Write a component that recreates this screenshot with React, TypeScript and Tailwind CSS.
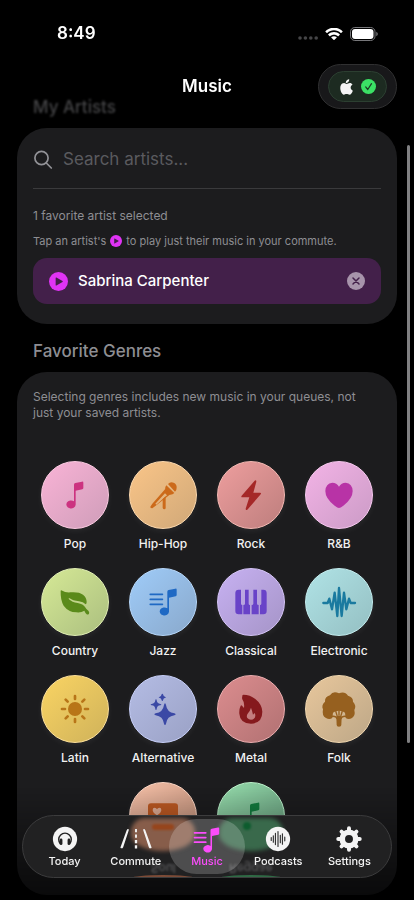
import { useState, type ReactNode } from 'react'
import clsx from 'clsx'

interface Genre {
  name: string
  circle: string
  icon: ReactNode
  underTabBar?: boolean
}

interface Tab {
  name: string
  icon: ReactNode
}

const NotePath = () => (
  <path d="M57 29q0-4 4-5l20-4q4-1 4 3v16q0 3-3 4l-20 4v42a14 12 0 1 1-5-10z" />
)

const PlaylistPath = () => (
  <>
    <path d="M73 29q0-4 4-5l20-4q4-1 4 3v16q0 3-3 4l-20 4v42a14 12 0 1 1-5-10z" />
    <path d="M22 37h36M22 52h36M22 67h36" fill="none" stroke="currentColor" strokeWidth="5.5" strokeLinecap="round" />
  </>
)

const GlyphIcon = ({ children, className = 'w-10 h-10' }: { children: ReactNode; className?: string }) => (
  <svg viewBox="0 0 120 120" className={className} fill="currentColor" aria-hidden="true">
    {children}
  </svg>
)

const genres: Genre[] = [
  {
    name: 'Pop',
    circle: 'from-[#f9b3d6] to-[#cf9db9] border-[#fccbe2] text-[#cc3380]',
    icon: <NotePath />,
  },
  {
    name: 'Hip-Hop',
    circle: 'from-[#fac588] to-[#d0a878] border-[#fdd9ae] text-[#cc6a1a]',
    icon: (
      <>
        <path d="M75 27a15 15 0 0 1 26 11q0 8-5 12z" />
        <path d="M70 31l24 23q-6 6-14 5L66 45q-1-8 4-14z" />
        <path d="M66 43l16 15-45 35-9 7-5-1-1-4 6-9zM66 55L37 86l3 3 32-28z" fillRule="evenodd" />
        <path d="M59 72l9-8v34q0 5-4 5t-5-5z" />
      </>
    ),
  },
  {
    name: 'Rock',
    circle: 'from-[#ee9e9e] to-[#bd7e7d] border-[#f4b9b3] text-[#a52828]',
    icon: <path d="M71 17L32 62q-3 5 2 5h21L44 101q0 6 5 3L89 58q3-5-2-5H67l9-33q0-6-5-3z" />,
  },
  {
    name: 'R&B',
    circle: 'from-[#f3b3e6] to-[#cb9bc6] border-[#f8c9f0] text-[#b833a6]',
    icon: <path d="M60 99Q56 99 47 92 19 71 19 48 20 25 40 23q13 0 20 12 7-12 20-12 20 2 21 25 0 23-28 44-9 7-13 7z" />,
  },
  {
    name: 'Country',
    circle: 'from-[#d6e996] to-[#abbf7f] border-[#e1efb4] text-[#5a8a1a]',
    icon: (
      <path d="M17 27q0-4 5-1 8 6 24 5 26-2 38 7 11 8 11 22 0 6-3 7-7-7-20-9-19-2-28-9-5-2-2 3 9 9 26 11 17 3 22 12 4 7 10 11 4 5 2 9-3 4-7 2-3-2-7-11-10 7-24 5-24-1-38-20Q16 54 17 27z" />
    ),
  },
  {
    name: 'Jazz',
    circle: 'from-[#9fccf9] to-[#89a8cb] border-[#b7d8fb] text-[#1f69c4]',
    icon: <PlaylistPath />,
  },
  {
    name: 'Classical',
    circle: 'from-[#c7b1f2] to-[#a594c7] border-[#d6c5f8] text-[#6943c8]',
    icon: (
      <path d="M23 23h7v42q0 4 4 4v28H23q-10 0-10-10V33q0-10 10-10zM42 23h11v42q0 4 4 4v28H37V69q5 0 5-4zM67 23h11v42q0 4 5 4v28H62V69q5 0 5-4zM91 23h6q10 0 10 10v54q0 10-10 10H87V69q4 0 4-4z" />
    ),
  },
  {
    name: 'Electronic',
    circle: 'from-[#b0e3e6] to-[#94bfc2] border-[#c4eef0] text-[#1a7a9f]',
    icon: (
      <path
        d="M13 63h13l5-13 8 32 8-50 8 70 5-84 8 84 7-70 7 50 8-32 5 13h13"
        fill="none"
        stroke="currentColor"
        strokeWidth="7"
        strokeLinecap="round"
        strokeLinejoin="round"
      />
    ),
  },
  {
    name: 'Latin',
    circle: 'from-[#fad463] to-[#cfb25a] border-[#fde09a] text-[#b87518]',
    icon: (
      <>
        <circle cx="60" cy="60" r="21" />
        <path
          d="M60 21v9M60 90v9M21 60h9M90 60h9M32 32l6 6M82 82l6 6M32 88l6-6M82 38l6-6"
          fill="none"
          stroke="currentColor"
          strokeWidth="8"
          strokeLinecap="round"
        />
      </>
    ),
  },
  {
    name: 'Alternative',
    circle: 'from-[#b4bce4] to-[#9aa1c5] border-[#c8d0fa] text-[#3a48a5]',
    icon: (
      <path d="M66 43q2 0 3 5 3 22 25 25 4 1 4 3t-4 3q-22 3-25 25-1 4-3 4t-3-4q-3-22-25-25-4-1-4-3t4-3q22-3 25-25 1-5 3-5zM39 31q2 0 2 3 1 10 11 11 3 1 3 2t-3 2q-10 1-11 11 0 3-2 3t-2-3q-1-10-11-11-3-1-3-2t3-2q10-1 11-11 0-3 2-3zM58 14q2 0 2 2 1 7 7 8 2 0 2 1t-2 1q-6 1-7 8 0 2-2 2t-2-2q-1-7-7-8-2 0-2-1t2-1q6-1 7-8 0-2 2-2z" />
    ),
  },
  {
    name: 'Metal',
    circle: 'from-[#dc8d8f] to-[#b17172] border-[#edaeb0] text-[#85191d]',
    icon: (
      <path
        fillRule="evenodd"
        d="M34 22q-1-4 3-5 20 0 36 13 20 16 21 38 0 34-34 36-33-1-35-30-1-14 4-24 2-2 4 0l6 7q2-17-4-24-3-5-1-11zM60 56q-3 10-9 17-6 8-2 14 4 5 11 5 12-1 13-12 0-5-2-8l-5 5q-3-13-6-21z"
      />
    ),
  },
  {
    name: 'Folk',
    circle: 'from-[#e8c79c] to-[#bda787] border-[#f2d8b0] text-[#96601f]',
    icon: (
      <>
        <path d="M60 13q-18-9-27 6-16 4-15 19-12 11-6 23-4 20 9 26 10 6 19 0l2-16q6-6 18-6t18 6l2 16q9 6 19 0 11-7 7-24 7-14-4-25 1-14-15-18-10-15-27-7z" />
        <path
          d="M38 82q13-2 17 8M82 82q-13-2-17 8M50 66l6 20M70 66l-6 20M60 64v16"
          fill="none"
          stroke="currentColor"
          strokeWidth="4"
        />
        <path d="M52 84q8-8 16 0l-1 24q0 5-7 5t-7-5z" />
      </>
    ),
  },
  {
    name: 'Soul',
    circle: 'from-[#f5c0a8] to-[#b98a74] border-[#fcd6c4] text-[#bb5822]',
    underTabBar: true,
    icon: (
      <path
        fillRule="evenodd"
        d="M24 22h72q9 0 9 9v46q0 9-9 9H24q-9 0-9-9V31q0-9 9-9zM42 58q13-8 13-16 0-7-6-7-5 0-7 5-2-5-7-5-6 0-6 7 0 8 13 16z"
      />
    ),
  },
  {
    name: 'Reggae',
    circle: 'from-[#95dbab] to-[#64997a] border-[#bcf2cb] text-[#127a3d]',
    underTabBar: true,
    icon: <NotePath />,
  },
]

const tabs: Tab[] = [
  {
    name: 'Today',
    icon: (
      <>
        <circle cx="60" cy="60" r="52" />
        <path d="M40 80a27 27 0 1 1 40 0" fill="none" stroke="#222" strokeWidth="6" />
        <rect x="37" y="58" width="12" height="28" rx="6" fill="#222" />
        <rect x="71" y="58" width="12" height="28" rx="6" fill="#222" />
      </>
    ),
  },
  {
    name: 'Commute',
    icon: (
      <path d="M20 22q2-5 6-5t3 5L5 95q-2 5-8 5t-3-6zM100 22q-2-5-6-5t-3 5l24 73q2 5 8 5t3-6zM56 17h8v14h-8zM56 41h8v14h-8zM55 64h10v14H55zM55 87h10v14H55z" />
    ),
  },
  {
    name: 'Music',
    icon: (
      <g transform="translate(-23 -16) scale(1.34)">
        <PlaylistPath />
      </g>
    ),
  },
  {
    name: 'Podcasts',
    icon: (
      <>
        <circle cx="60" cy="60" r="52" />
        <path
          d="M31 54v12M40 46v28M49 36v48M60 28v64M70 44v32M79 38v44M89 52v16"
          fill="none"
          stroke="#333"
          strokeWidth="5"
          strokeLinecap="round"
        />
      </>
    ),
  },
  {
    name: 'Settings',
    icon: (
      <>
        <circle cx="60" cy="60" r="29" fill="none" stroke="currentColor" strokeWidth="24" />
        <path
          d="M60 14v14M60 92v14M14 60h14M92 60h14M28 28l9 9M83 83l9 9M28 92l9-9M83 37l9-9"
          fill="none"
          stroke="currentColor"
          strokeWidth="17"
          strokeLinecap="round"
        />
      </>
    ),
  },
]

const PlayBadge = ({ className }: { className: string }) => (
  <svg viewBox="0 0 20 20" className={className} aria-hidden="true">
    <circle cx="10" cy="10" r="10" fill="#e033f5" />
    <path d="M7 6.3q0-.9.8-.5l6.4 3.7q.7.5 0 1l-6.4 3.7q-.8.4-.8-.5z" fill="#43204a" />
  </svg>
)

const StatusBar = () => (
  <div className="flex h-16 items-center justify-between pt-1 pr-9 pl-[57px] text-white">
    <span className="text-[17px] font-semibold">8:49</span>
    <div className="flex items-center gap-[7px]">
      <svg viewBox="0 0 20 4" className="mt-2 h-1 w-5" fill="#454547" aria-hidden="true">
        <circle cx="2" cy="2" r="1.8" />
        <circle cx="7.4" cy="2" r="1.8" />
        <circle cx="12.8" cy="2" r="1.8" />
        <circle cx="18.2" cy="2" r="1.8" />
      </svg>
      <svg viewBox="0.5 0.8 16 11" className="h-[13px] w-[18px]" fill="white" aria-hidden="true">
        <path d="M8.5 2.6c2.3 0 4.4.9 6 2.4.1.1.3.1.4 0l1.2-1.2c.1-.1.1-.4 0-.5-4.3-4.1-10.9-4.1-15.2 0-.1.1-.1.4 0 .5L2.1 5c.1.1.3.1.4 0 1.6-1.5 3.7-2.4 6-2.4zM8.5 6.5c1.3 0 2.5.5 3.4 1.3.1.1.3.1.5 0l1.2-1.2c.1-.1.1-.4 0-.5-2.9-2.7-7.3-2.7-10.2 0-.1.1-.1.4 0 .5l1.2 1.2c.1.1.3.1.5 0 .9-.8 2.1-1.3 3.4-1.3zM10.8 9.1c.1-.1.1-.4 0-.5-1.3-1.1-3.3-1.1-4.6 0-.1.1-.1.4 0 .5l2.1 2.1c.1.1.3.1.4 0z" />
      </svg>
      <svg viewBox="0 0 28 14" className="h-3.5 w-7" aria-hidden="true">
        <rect x="0.5" y="0.5" width="24.5" height="13" rx="4.3" fill="none" stroke="#77777a" />
        <rect x="2" y="2" width="21.5" height="10" rx="3" fill="white" />
        <path d="M26.3 4.8v4.4q1.5-.7 1.5-2.2t-1.5-2.2z" fill="#77777a" />
      </svg>
    </div>
  </div>
)

const Header = () => (
  <header className="fixed inset-x-0 top-0 z-20">
    <StatusBar />
    <div className="grid grid-cols-[1fr_auto_1fr] items-center px-[17px]">
      <h1 className="col-start-2 text-[17px] font-semibold text-white">Music</h1>
      <button
        aria-label="Apple Music connected"
        className="justify-self-end rounded-full border border-[#303031] bg-[#18181a] px-[9px] py-1.5"
      >
        <span className="flex h-[31px] w-[59px] items-center justify-center gap-2 rounded-full border border-[#2c3f31] bg-[#1d2b21]">
          <svg viewBox="0 0 38 48" className="h-4 w-[13px]" fill="#f4f4f4" aria-hidden="true">
            <path d="M27 1c1 6-5 12-10 11-1-6 5-11 10-11zM19 15c3 0 6-3 10-3 4 0 6 2 8 5-8 4-7 15 1 18-2 6-6 12-10 12-3 0-5-2-9-2s-5 2-8 2C4 47-3 29 2 19c2-5 6-7 10-7 3 0 5 3 7 3z" />
          </svg>
          <svg viewBox="0 0 16 16" className="h-[15px] w-[15px]" aria-hidden="true">
            <circle cx="8" cy="8" r="8" fill="#3be165" />
            <path d="M5 8.5l2.2 2.7L11.2 5" fill="none" stroke="#1d3b25" strokeWidth="1.3" strokeLinecap="round" strokeLinejoin="round" />
          </svg>
        </span>
      </button>
    </div>
  </header>
)

const ArtistsCard = () => (
  <section className="rounded-[30px] bg-[#1c1c1e] px-4 pb-5">
    <div className="flex h-[61px] items-center gap-2.5 border-b border-[#3a3a3c] pt-1">
      <svg viewBox="0 0 20 20" className="h-5 w-5 shrink-0" fill="none" stroke="#929297" strokeWidth="1.7" strokeLinecap="round" aria-hidden="true">
        <circle cx="8.5" cy="8" r="6.6" />
        <path d="M13.3 13l5 5" />
      </svg>
      <input
        type="text"
        aria-label="Search artists"
        placeholder="Search artists..."
        className="min-w-0 flex-1 bg-transparent text-[17px] text-white outline-none placeholder:text-[#5a5a5e]"
      />
    </div>
    <p className="mt-[18px] text-xs leading-[18px] text-[#8e8e93]">1 favorite artist selected</p>
    <p className="mt-2 flex items-center text-[11px] leading-4 text-[#8e8e93]">
      Tap an artist's
      <PlayBadge className="mx-1 h-3 w-3" />
      to play just their music in your commute.
    </p>
    <div className="mt-[9px] flex h-[46px] items-center gap-2.5 rounded-[14px] bg-[#43204a] px-4">
      <button aria-label="Play Sabrina Carpenter">
        <PlayBadge className="h-[19px] w-[19px]" />
      </button>
      <span className="flex-1 text-[15px] font-medium text-white">Sabrina Carpenter</span>
      <button aria-label="Remove Sabrina Carpenter">
        <svg viewBox="0 0 18 18" className="h-[18px] w-[18px]" aria-hidden="true">
          <circle cx="9" cy="9" r="9" fill="#a794ab" />
          <path d="M6 6l6 6M12 6l-6 6" stroke="#43204a" strokeWidth="1.5" strokeLinecap="round" />
        </svg>
      </button>
    </div>
  </section>
)

const GenresCard = () => (
  <section className="rounded-[30px] bg-[#1c1c1e] pb-[22px]">
    <p className="pt-[17px] pr-8 pl-4 text-xs leading-4 text-[#8e8e93]">
      Selecting genres includes new music in your queues, not just your saved artists.
    </p>
    <div className="mt-10 grid grid-cols-4 gap-y-4 px-3.5">
      {genres.map((genre) => (
        <button
          key={genre.name}
          aria-label={genre.name}
          className={clsx('flex flex-col items-center', genre.name === 'Soul' && 'col-start-2')}
        >
          <span
            className={clsx(
              'flex h-[68px] w-[68px] items-center justify-center rounded-full border bg-linear-to-br shadow-[0_2px_6px_rgba(255,255,255,0.06)]',
              genre.circle
            )}
          >
            <GlyphIcon>{genre.icon}</GlyphIcon>
          </span>
          <span
            className={clsx(
              'mt-1.5 h-[17px] text-xs leading-[17px] font-medium text-[#f2f2f2]',
              genre.underTabBar && 'invisible'
            )}
          >
            {!genre.underTabBar && genre.name}
          </span>
        </button>
      ))}
    </div>
  </section>
)

// Glass refraction of the row that slides under the tab bar
const TabBarGlow = () => (
  <div className="absolute inset-0 overflow-hidden rounded-full" aria-hidden="true">
    <div className="grid h-full grid-cols-4 px-[9px]">
      <div className="relative col-start-2">
        <div className="absolute top-0.5 left-1/2 h-[33px] w-[64px] -translate-x-1/2 rounded-[14px_14px_50%_50%] bg-[#875d4a] blur-[2px]" />
        <div className="absolute top-2 left-1/2 h-1.5 w-[22px] -translate-x-1/2 rounded-full bg-[#96451c] blur-[1px]" />
        <span className="absolute inset-x-0 top-11 -scale-y-100 text-center text-xs leading-4 font-medium text-[#59595b] blur-[1px]">
          Soul
        </span>
        <div className="absolute -bottom-1 left-1/2 h-1.5 w-[62px] -translate-x-1/2 rounded-[50%] bg-[#7c4b37]" />
      </div>
      <div className="relative">
        <div className="absolute top-0.5 left-1/2 h-[33px] w-[64px] -translate-x-1/2 rounded-[14px_14px_50%_50%] bg-[#39694b] blur-[2px]" />
        <div className="absolute top-1.5 left-1/2 h-2 w-2 -translate-x-2 rounded-full bg-[#0d5c2e] blur-[1px]" />
        <span className="absolute inset-x-0 top-11 -scale-y-100 text-center text-xs leading-4 font-medium text-[#59595b] blur-[1px]">
          Reggae
        </span>
        <div className="absolute -bottom-1 left-1/2 h-1.5 w-[62px] -translate-x-1/2 rounded-[50%] bg-[#2f6a45]" />
      </div>
    </div>
  </div>
)

const App = () => {
  const [activeTab, setActiveTab] = useState('Music')

  return (
    <div className="min-h-screen bg-black font-['Inter','Liberation_Sans',sans-serif]">
      <Header />

      <main className="px-[17px] pt-20 pb-1">
        <h2 className="flex h-12 items-center px-4 pt-2 text-[17px] font-medium text-[#454547] blur-[1px]">My Artists</h2>
        <ArtistsCard />
        <h2 className="flex h-12 items-center px-4 pt-2 text-[17px] font-medium text-[#8e8e93]">Favorite Genres</h2>
        <GenresCard />
      </main>

      <div className="fixed top-[145px] right-1 bottom-[157px] w-[3px] rounded-full bg-[#808082]" aria-hidden="true" />
      <div className="pointer-events-none fixed inset-x-0 bottom-0 h-28 bg-linear-to-b from-transparent to-black/65" aria-hidden="true" />

      <nav className="fixed inset-x-[22px] bottom-[22px] z-20 rounded-full border border-[#3c3c3d] bg-[#212122]">
        <TabBarGlow />
        <div className="relative flex px-1.5 py-[3px]">
          {tabs.map((tab) => (
            <button
              key={tab.name}
              onClick={() => setActiveTab(tab.name)}
              className={clsx(
                'relative flex h-[55px] flex-1 flex-col items-center justify-center',
                tab.name === activeTab ? 'text-[#fb4dfb]' : 'text-[#f4f4f4]'
              )}
            >
              {tab.name === activeTab && <span className="absolute inset-y-0 -inset-x-0.5 rounded-full bg-white/20" />}
              <GlyphIcon className="relative h-7 w-7 overflow-visible">{tab.icon}</GlyphIcon>
              <span className="relative text-[11px] leading-4 font-medium">{tab.name}</span>
            </button>
          ))}
        </div>
      </nav>
    </div>
  )
}

export default App
